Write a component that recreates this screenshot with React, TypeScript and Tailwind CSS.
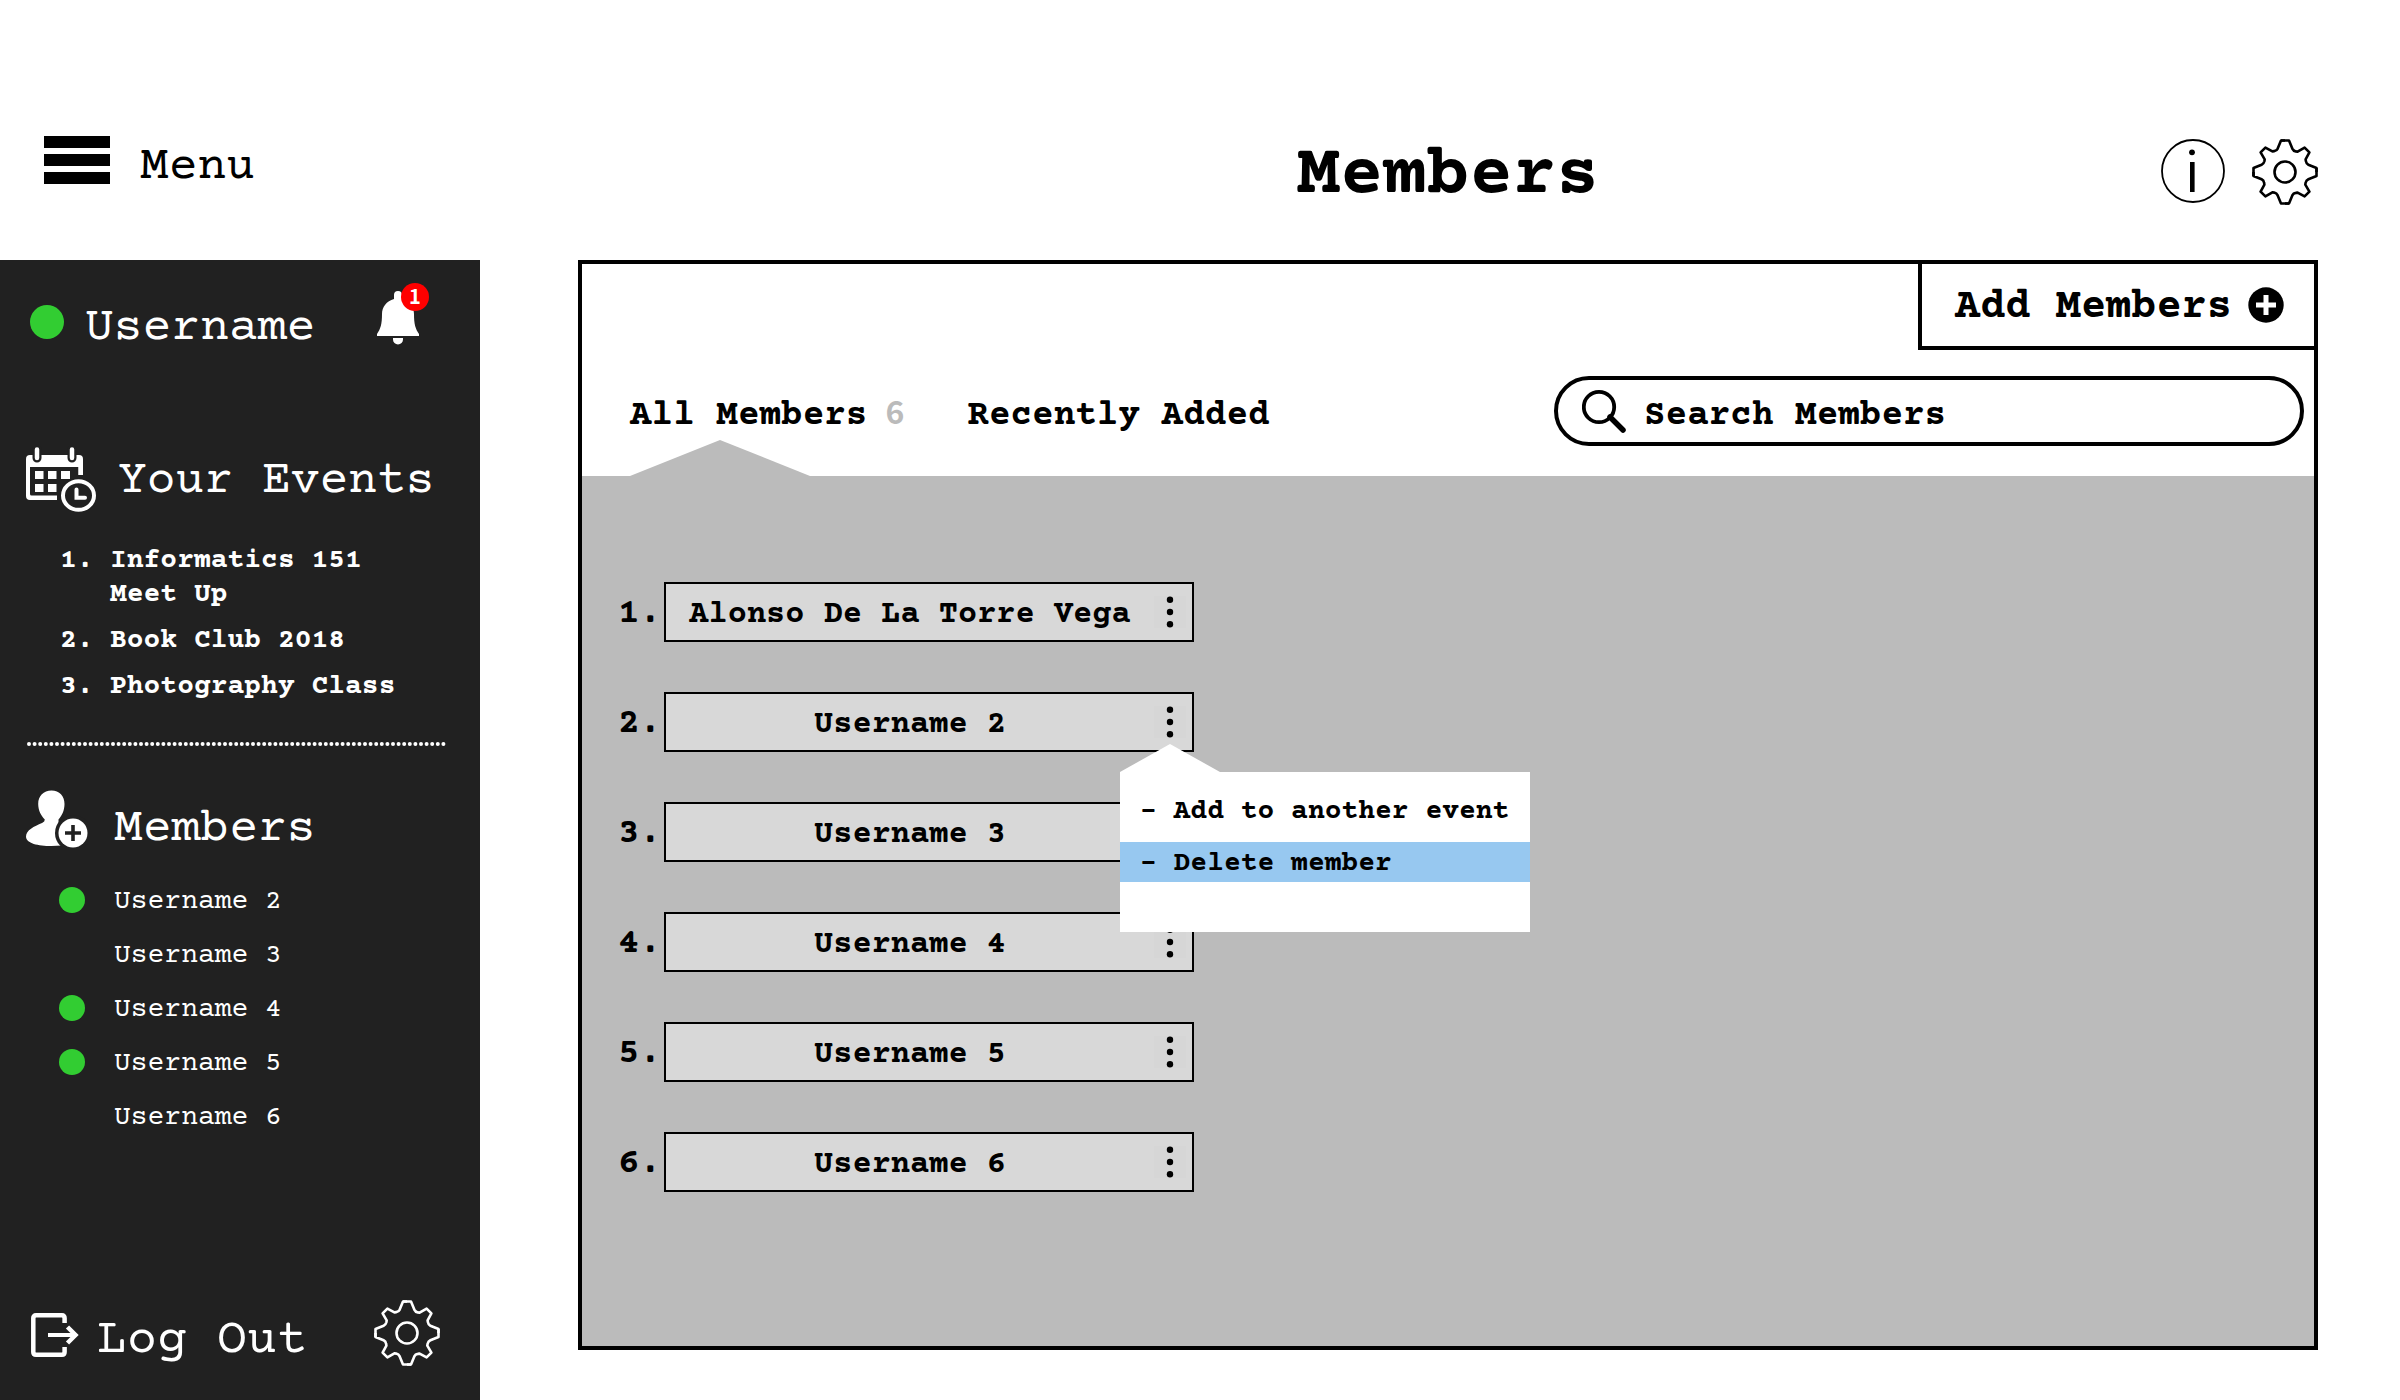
import React from "react";

const events = ["Informatics 151 Meet Up", "Book Club 2018", "Photography Class"];

const sidebarMembers = [
  { name: "Username 2", online: true },
  { name: "Username 3", online: false },
  { name: "Username 4", online: true },
  { name: "Username 5", online: true },
  { name: "Username 6", online: false },
];

const members = [
  "Alonso De La Torre Vega",
  "Username 2",
  "Username 3",
  "Username 4",
  "Username 5",
  "Username 6",
];

function GearIcon() {
  const quarter =
    "M-4 -31.5H4L7.3 -23.4Q8.3 -21.2 10.8 -20.6L12.6 -20.3L19.6 -24.4L24.4 -19.6L20.6 -12.6L20.9 -10.8Q21.2 -8.3 23.4 -7.3L31.5 -4V0";
  return (
    <svg
      viewBox="-33 -33 66 66"
      className="size-[66px] shrink-0"
      fill="none"
      stroke="currentColor"
      strokeWidth="2.6"
      strokeLinejoin="round"
      aria-hidden="true"
    >
      <path d={quarter} />
      <path d={quarter} transform="rotate(90)" />
      <path d={quarter} transform="rotate(180)" />
      <path d={quarter} transform="rotate(270)" />
      <circle r="10.5" />
    </svg>
  );
}

function InfoIcon() {
  return (
    <svg viewBox="0 0 64 64" className="size-16 shrink-0" aria-hidden="true">
      <circle cx="32" cy="32" r="31" fill="none" stroke="currentColor" strokeWidth="1.8" />
      <circle cx="31" cy="13.3" r="2.9" fill="currentColor" />
      <rect x="29" y="23" width="4.6" height="30" fill="currentColor" />
    </svg>
  );
}

function MenuIcon() {
  return (
    <span className="flex w-[66px] flex-col gap-1.5" aria-hidden="true">
      <span className="h-3 bg-black" />
      <span className="h-3 bg-black" />
      <span className="h-3 bg-black" />
    </span>
  );
}

function BellIcon() {
  return (
    <svg viewBox="0 0 42 54" className="h-[54px] w-[42px]" fill="currentColor" aria-hidden="true">
      <path d="M17 8V4a4 4 0 0 1 8 0V8C32.5 10 37 16 37 23C37 33 38.500 38 42 43V45H0V43C3.500 38 5 33 5 23C5 16 9.500 10 17 8Z" />
      <path d="M16 47H26V48.500a5 5 0 0 1 -10 0Z" />
    </svg>
  );
}

function CalendarIcon() {
  return (
    <svg viewBox="0 0 70 66" className="h-[66px] w-[70px] shrink-0" aria-hidden="true">
      <g fill="#fff">
        <path
          fillRule="evenodd"
          d="M4 9H53Q57 9 57 13V29H52.500V21H4V48Q4 49.500 5.500 49.500H31V54H4Q0 54 0 50V13Q0 9 4 9Z"
        />
        <path d="M9 25h8.500v8H9zM22 25h8.500v8H22zM35 25h9v8H35zM9 38h8.500v8H9zM22 38h8.500v8H22z" />
      </g>
      <g strokeLinecap="round">
        <path d="M11 3V12M46 3V12" stroke="#212121" strokeWidth="9" />
        <path d="M11 3.500V12M46 3.500V12" stroke="#fff" strokeWidth="4.500" />
      </g>
      <ellipse cx="52.500" cy="49.500" rx="18.500" ry="17.500" fill="#212121" />
      <path d="M35 25h9v8H35zM52.500 21h4.500v8h-4.500z" fill="#fff" />
      <ellipse cx="52.500" cy="49.500" rx="15.500" ry="14.300" fill="none" stroke="#fff" strokeWidth="4" />
      <path d="M50.500 43.500V51.700H59" fill="none" stroke="#fff" strokeWidth="4" strokeLinecap="round" />
    </svg>
  );
}

function AddPersonIcon() {
  return (
    <svg viewBox="0 0 62 58" className="h-[58px] w-[62px] shrink-0" aria-hidden="true">
      <path
        fill="#fff"
        d="M25.500 0.500C33.500 0.500 38.500 6 38.500 14C38.500 20.500 36 25.500 32.500 29.500V33L36 36V55.500C20 57 0 55.500 0 46.500C0 40 8 36.500 16 33Q19 31.500 18.800 29.500C15 25.500 12.200 20.500 12.200 14C12.200 6 17.500 0.500 25.500 0.500Z"
      />
      <circle cx="47" cy="43" r="18" fill="#212121" />
      <circle cx="47" cy="43" r="14.500" fill="#fff" />
      <path d="M47 35V51M39 43H55" stroke="#212121" strokeWidth="3.600" />
    </svg>
  );
}

function LogoutIcon() {
  return (
    <svg viewBox="0 0 48 44" className="mt-1 h-11 w-12 shrink-0" fill="none" stroke="currentColor" strokeWidth="4.500" aria-hidden="true">
      <path d="M33.600 10V5Q33.600 2.300 31 2.300H5Q2.300 2.300 2.300 5V39Q2.300 41.700 5 41.700H31Q33.600 41.700 33.600 39V34" />
      <path d="M17 22H44" strokeWidth="4" />
      <path d="M36.500 14L44.500 22L36.500 30" />
    </svg>
  );
}

function PlusCircleIcon() {
  return (
    <svg viewBox="0 0 36 36" className="size-9 shrink-0" aria-hidden="true">
      <circle cx="18" cy="18" r="17.700" fill="currentColor" />
      <path d="M18 8V28M8 18H28" stroke="#fff" strokeWidth="5" />
    </svg>
  );
}

function SearchIcon() {
  return (
    <svg viewBox="0 0 44 44" className="size-11 shrink-0" fill="none" stroke="currentColor" aria-hidden="true">
      <circle cx="17" cy="18" r="15.200" strokeWidth="3.800" />
      <path d="M28 28L41 41" strokeWidth="5.500" strokeLinecap="round" />
    </svg>
  );
}

function DotsIcon() {
  return (
    <svg viewBox="0 0 32 32" className="size-8" fill="currentColor" aria-hidden="true">
      <circle cx="16" cy="3.700" r="3.200" />
      <circle cx="16" cy="16" r="3.200" />
      <circle cx="16" cy="28.300" r="3.200" />
    </svg>
  );
}

function MemberMenu() {
  return (
    <div className="absolute -left-[34px] top-[38px] z-10 w-[410px] text-[28px] leading-9">
      <svg viewBox="0 0 100 28" className="block h-7 w-[100px]" aria-hidden="true">
        <path d="M0 28L50 0L100 28Z" fill="#fff" />
      </svg>
      <ul className="bg-white pb-[50px] pt-[18px]">
        <li className="mb-3">
          <button type="button" className="block w-full whitespace-pre px-5 pt-1 text-left font-bold">
            - Add to another event
          </button>
        </li>
        <li>
          <button type="button" className="block w-full whitespace-pre bg-[#97c8f0] px-5 pt-1 text-left font-bold">
            - Delete member
          </button>
        </li>
      </ul>
    </div>
  );
}

function Sidebar() {
  return (
    <aside className="flex w-[480px] shrink-0 flex-col bg-[#212121] text-white">
      <div className="flex h-[124px] items-center pl-[30px] pr-[61px]">
        <span className="size-[34px] rounded-full bg-[#32cd32]" />
        <span className="ml-[21px] pt-3 text-[48px] leading-none">Username</span>
        <button type="button" aria-label="Notifications" className="relative -mt-2 ml-auto">
          <BellIcon />
          <span className="absolute -right-[10px] -top-2 flex size-7 items-center justify-center rounded-full bg-[#ff0000] pb-0.5 font-['Noto_Sans_CJK_SC',sans-serif] text-[20px] font-bold leading-none">
            1
          </span>
        </button>
      </div>

      <section className="mt-[62px]">
        <h2 className="flex items-center gap-[22px] pl-[26px] text-[48px] leading-none">
          <CalendarIcon />
          <span className="pt-1">Your Events</span>
        </h2>
        <ol className="mt-8 flex flex-col gap-3 pl-[60px] pr-[58px] text-[28px] font-bold leading-[34px]">
          {events.map((event, i) => (
            <li key={event} className="flex">
              <span className="w-[50px] shrink-0">{i + 1}.</span>
              <a href="#event">{event}</a>
            </li>
          ))}
        </ol>
      </section>

      <svg className="ml-[27px] mt-[38px] h-1 w-[420px]" aria-hidden="true">
        <line x1="2" y1="2" x2="418" y2="2" stroke="#fff" strokeWidth="4" strokeLinecap="round" strokeDasharray="0 5.6" />
      </svg>

      <section className="mt-11">
        <h2 className="flex h-[58px] items-center gap-[26px] pl-[26px] text-[48px] leading-none">
          <AddPersonIcon />
          <span className="pt-5">Members</span>
        </h2>
        <ul className="mt-[25px] pl-[59px] text-[28px] leading-none">
          {sidebarMembers.map((m) => (
            <li key={m.name} className="flex h-[54px] items-center">
              <span className={m.online ? "size-[26px] rounded-full bg-[#32cd32]" : "size-[26px]"} />
              <a href="#member" className="ml-[29px] pt-1">{m.name}</a>
            </li>
          ))}
        </ul>
      </section>

      <div className="mt-auto flex items-center pb-[34px] pl-[31px] pr-10">
        <button type="button" className="flex items-center gap-[18px] text-[50px] leading-none">
          <LogoutIcon />
          <span className="pt-4">Log Out</span>
        </button>
        <button type="button" aria-label="Account settings" className="ml-auto">
          <GearIcon />
        </button>
      </div>
    </aside>
  );
}

export default function App() {
  return (
    <div className="flex min-h-screen flex-col bg-white font-['Courier_Prime','Courier_New','Liberation_Mono',monospace] text-black">
      <header className="flex h-[260px]">
        <div className="w-[480px] shrink-0 pl-11 pt-[136px]">
          <button type="button" className="flex h-12 items-center gap-[30px] text-[48px] leading-none">
            <MenuIcon />
            <span className="pt-3.5">Menu</span>
          </button>
        </div>
        <div className="ml-[98px] mr-[82px] grid flex-1 grid-cols-[1fr_auto_1fr] items-start pt-[139px]">
          <span />
          <h1 className="pt-0.5 text-[72px] font-bold leading-[72px]">Members</h1>
          <div className="flex items-start justify-end gap-[27px]">
            <button type="button" aria-label="Information">
              <InfoIcon />
            </button>
            <button type="button" aria-label="Settings">
              <GearIcon />
            </button>
          </div>
        </div>
      </header>

      <div className="flex flex-1">
        <Sidebar />

        <main className="mb-[50px] ml-[98px] mr-[82px] flex flex-1 flex-col border-4 border-black font-bold">
          <button
            type="button"
            className="flex h-[86px] items-center gap-4 self-end border-b-4 border-l-4 border-black pl-[33px] pr-[30px] text-[42px] font-bold leading-none"
          >
            <span className="pt-1.5">Add Members</span>
            <PlusCircleIcon />
          </button>

          <div className="mb-[30px] mt-[26px] flex h-[70px] items-center justify-between pl-12 pr-2.5 text-[36px] leading-none">
            <nav className="flex h-full gap-[63px]">
              <button type="button" className="relative flex h-full items-center whitespace-nowrap pt-2.5 font-bold">
                <span className="flex items-baseline gap-[18px]">
                  All Members
                  <span className="font-['Noto_Sans_CJK_SC',sans-serif] text-[32px] font-bold leading-6 text-[#bbbbbb]">6</span>
                </span>
                <svg viewBox="0 0 180 36" className="absolute left-0 top-16 h-9 w-[180px]" aria-hidden="true">
                  <path d="M0 36L90 0L180 36Z" fill="#bbb" />
                </svg>
              </button>
              <button type="button" className="flex h-full items-center whitespace-nowrap pt-2.5 font-bold">
                Recently Added
              </button>
            </nav>
            <label className="flex h-full w-[750px] items-center rounded-full border-4 border-black pl-6 pr-8">
              <SearchIcon />
              <input
                type="text"
                aria-label="Search Members"
                placeholder="Search Members"
                className="ml-[18px] h-full min-w-0 flex-1 bg-transparent pt-2.5 font-bold outline-none placeholder:text-black placeholder:opacity-100"
              />
            </label>
          </div>

          <div className="flex-1 bg-[#bbbbbb] pb-10 pl-9 pt-[106px]">
            <ol className="flex flex-col gap-[50px]">
              {members.map((name, i) => (
                <li key={name} className="flex items-center">
                  <span className="w-[46px] pt-1 text-[36px] leading-none">{i + 1}.</span>
                  <div className="flex h-[60px] w-[530px] items-center border-2 border-black bg-[#d8d8d8]">
                    <span className="flex-1 pt-1.5 text-center text-[32px] leading-none">{name}</span>
                    <div className="relative mr-1.5">
                      <button type="button" aria-label={`Options for ${name}`} className="block bg-[#d6d6d6]">
                        <DotsIcon />
                      </button>
                      {i === 1 && <MemberMenu />}
                    </div>
                  </div>
                </li>
              ))}
            </ol>
          </div>
        </main>
      </div>
    </div>
  );
}
